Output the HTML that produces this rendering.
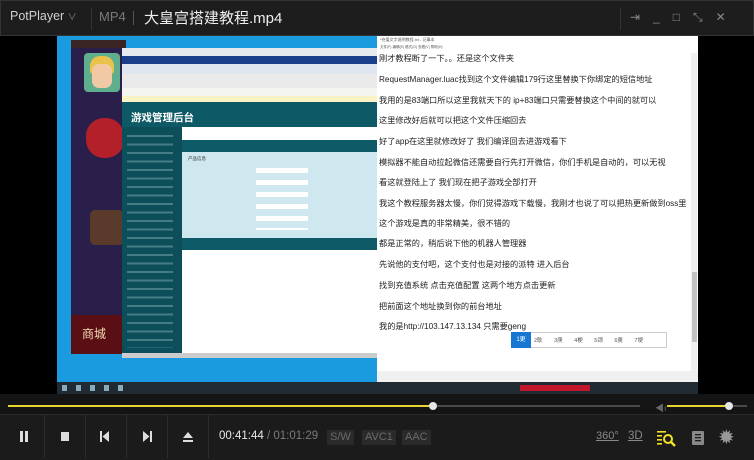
<!DOCTYPE html>
<html><head><meta charset="utf-8"><style>
*{margin:0;padding:0;box-sizing:border-box}
body{width:754px;height:460px;background:#000;overflow:hidden;position:relative;font-family:"Liberation Sans","Noto Sans CJK SC",sans-serif}
.a{position:absolute}
.nl{position:absolute;left:379px;font-size:8.2px;color:#222;white-space:nowrap}
.btn{position:absolute;top:415px;height:43px;border-right:1px solid #2c2c2c}
.tag{position:absolute;top:430px;height:15px;background:#2a2a2a;color:#6a6a6a;font-size:11px;line-height:15px;padding:0 3px}
</style></head><body>
<div class="a" style="left:0;top:0;width:754px;height:36px;background:#1d1d1d;border:1px solid #333"></div>
<div class="a" style="left:91px;top:8px;width:1px;height:22px;background:#333"></div>
<div class="a" style="left:620px;top:8px;width:1px;height:22px;background:#333"></div>
<div class="a" style="left:10px;top:9px;color:#cfcfcf;font-size:12.5px">PotPlayer <span style="font-size:9px;color:#888">∨</span></div>
<div class="a" style="left:99px;top:9px;color:#7a7a7a;font-size:13px">MP4</div>
<div class="a" style="left:133px;top:11px;width:1px;height:14px;background:#555"></div>
<div class="a" style="left:144px;top:7px;color:#eee;font-size:15px">大皇宫搭建教程.mp4</div>
<div class="a" style="left:630px;top:10px;color:#888;font-size:12px;letter-spacing:13px">⇥_□⤡✕</div>
<div class="a" style="left:57px;top:36px;width:641px;height:358px;background:#1a9be0"></div>
<div class="a" style="left:57px;top:382px;width:641px;height:12px;background:#1f2a33"></div>
<div class="a" style="left:62px;top:385px;width:70px;height:6px;background:repeating-linear-gradient(90deg,#8ab 0 5px,transparent 5px 14px)"></div>
<div class="a" style="left:71px;top:40px;width:55px;height:314px;background:#2a1f4a"></div>
<div class="a" style="left:71px;top:40px;width:55px;height:8px;background:#3a2424"></div>
<div class="a" style="left:84px;top:53px;width:36px;height:39px;background:#5fae8e;border-radius:4px"></div>
<div class="a" style="left:90px;top:56px;width:24px;height:18px;background:#e8c24a;border-radius:10px 10px 3px 3px"></div>
<div class="a" style="left:92px;top:64px;width:20px;height:24px;background:#f1c9a5;border-radius:7px"></div>
<div class="a" style="left:86px;top:118px;width:38px;height:40px;background:#b3202a;border-radius:18px"></div>
<div class="a" style="left:90px;top:210px;width:34px;height:35px;background:#5a3a2a;border-radius:5px"></div>
<div class="a" style="left:71px;top:315px;width:55px;height:39px;background:#5a0f14"></div>
<div class="a" style="left:82px;top:325px;color:#f5d9b0;font-size:12px">商城</div>
<div class="a" style="left:122px;top:48px;width:256px;height:310px;background:#fff"></div>
<div class="a" style="left:122px;top:48px;width:256px;height:8px;background:#e6e9ee"></div>
<div class="a" style="left:122px;top:56px;width:256px;height:8px;background:#1a3e8a"></div>
<div class="a" style="left:122px;top:64px;width:256px;height:10px;background:#dfe6f0"></div>
<div class="a" style="left:122px;top:74px;width:256px;height:14px;background:#eaeaea"></div>
<div class="a" style="left:122px;top:88px;width:256px;height:8px;background:#f5f5f0"></div>
<div class="a" style="left:122px;top:96px;width:256px;height:6px;background:#fbf2c6"></div>
<div class="a" style="left:122px;top:102px;width:256px;height:25px;background:#0d5966"></div>
<div class="a" style="left:131px;top:110px;color:#fff;font-size:10.5px;font-weight:bold">游戏管理后台</div>
<div class="a" style="left:122px;top:127px;width:60px;height:226px;background:#0c4e5a"></div>
<div class="a" style="left:127px;top:133px;width:46px;height:215px;background:repeating-linear-gradient(180deg,transparent 0 2px,#6c9aa2 2px 4px,transparent 4px 8.5px);opacity:.6"></div>
<div class="a" style="left:182px;top:140px;width:196px;height:12px;background:#0e5a66"></div>
<div class="a" style="left:182px;top:152px;width:196px;height:86px;background:#cfe7ef"></div>
<div class="a" style="left:188px;top:156px;font-size:4.5px;color:#333">产品信息</div>
<div class="a" style="left:256px;top:168px;width:52px;height:62px;background:repeating-linear-gradient(180deg,#fff 0 5px,transparent 5px 12px)"></div>
<div class="a" style="left:182px;top:238px;width:196px;height:12px;background:#0e5a66"></div>
<div class="a" style="left:122px;top:353px;width:256px;height:5px;background:#ccc"></div>
<div class="a" style="left:377px;top:36px;width:321px;height:346px;background:#fff"></div>
<div class="a" style="left:380px;top:37px;font-size:4px;color:#555">*充值文字说明教程.txt - 记事本</div>
<div class="a" style="left:380px;top:45px;font-size:3.5px;color:#555">文件(F) 编辑(E) 格式(O) 查看(V) 帮助(H)</div>
<div class="a" style="left:691px;top:53px;width:6px;height:318px;background:#f0f0f0"></div>
<div class="a" style="left:692px;top:272px;width:5px;height:70px;background:#c2c2c2"></div>
<div class="nl" style="top:52px">刚才教程断了一下。。还是这个文件夹</div>
<div class="nl" style="top:73px">RequestManager.luac找到这个文件编辑179行这里替换下你绑定的短信地址</div>
<div class="nl" style="top:94px">我用的是83端口所以这里我就天下的 ip+83端口只需要替换这个中间的就可以</div>
<div class="nl" style="top:114px">这里修改好后就可以把这个文件压缩回去</div>
<div class="nl" style="top:135px">好了app在这里就修改好了 我们编译回去进游戏看下</div>
<div class="nl" style="top:156px">模拟器不能自动拉起微信还需要自行先打开微信，你们手机是自动的，可以无视</div>
<div class="nl" style="top:176px">看这就登陆上了  我们现在把子游戏全部打开</div>
<div class="nl" style="top:197px">我这个教程服务器太慢，你们觉得游戏下载慢，我刚才也说了可以把热更新做到oss里</div>
<div class="nl" style="top:217px">这个游戏是真的非常精美，很不错的</div>
<div class="nl" style="top:237px">都是正常的，稍后说下他的机器人管理器</div>
<div class="nl" style="top:258px">先说他的支付吧，这个支付也是对接的派特  进入后台</div>
<div class="nl" style="top:279px">找到充值系统 点击充值配置 这两个地方点击更新</div>
<div class="nl" style="top:300px">把前面这个地址换到你的前台地址</div>
<div class="nl" style="top:320px">我的是http://103.147.13.134 只需要geng</div>
<div class="a" style="left:511px;top:332px;width:156px;height:16px;background:#fff;border:1px solid #ccc"></div>
<div class="a" style="left:511px;top:332px;width:20px;height:16px;background:#1677d2;color:#fff;font-size:6px;line-height:16px;text-align:center">1更</div>
<div class="a" style="left:534px;top:336px;font-size:5.5px;color:#555;word-spacing:10px">2耿 3庚 4梗 5颈 6羹 7埂</div>
<div class="a" style="left:377px;top:371px;width:321px;height:11px;background:#f0f0f0"></div>
<div class="a" style="left:520px;top:385px;width:70px;height:6px;background:#c0182a"></div>
<div class="a" style="left:0;top:394px;width:754px;height:66px;background:#1b1b1b"></div>
<div class="a" style="left:0;top:394px;width:754px;height:20px;background:#141414"></div>
<div class="a" style="left:8px;top:405px;width:632px;height:2px;background:#4a4a4a"></div>
<div class="a" style="left:8px;top:405px;width:425px;height:2px;background:#e8d331"></div>
<div class="a" style="left:429px;top:402px;width:8px;height:8px;border-radius:50%;background:#e6e6e6"></div>
<div class="a" style="left:655px;top:401px;color:#666;font-size:9px">◀ı</div>
<div class="a" style="left:667px;top:405px;width:80px;height:2px;background:#4a4a4a"></div>
<div class="a" style="left:667px;top:405px;width:62px;height:2px;background:#e8d331"></div>
<div class="a" style="left:725px;top:402px;width:8px;height:8px;border-radius:50%;background:#e6e6e6"></div>
<div class="a" style="left:0;top:414px;width:754px;height:1px;background:#2a2a2a"></div>
<div class="btn" style="left:3px;width:42px"></div>
<div class="btn" style="left:45px;width:41px"></div>
<div class="btn" style="left:86px;width:41px"></div>
<div class="btn" style="left:127px;width:41px"></div>
<div class="btn" style="left:168px;width:41px"></div>
<div class="a" style="left:20px;top:431px;width:3px;height:11px;background:#ddd"></div>
<div class="a" style="left:25px;top:431px;width:3px;height:11px;background:#ddd"></div>
<div class="a" style="left:61px;top:432px;width:8px;height:9px;background:#ddd"></div>
<svg class="a" style="left:100px;top:431px" width="10" height="11"><rect x="0" y="0" width="2" height="11" fill="#ddd"/><path d="M9 0 L2.5 5.5 L9 11Z" fill="#ddd"/></svg>
<svg class="a" style="left:142px;top:431px" width="10" height="11"><rect x="8" y="0" width="2" height="11" fill="#ddd"/><path d="M1 0 L7.5 5.5 L1 11Z" fill="#ddd"/></svg>
<svg class="a" style="left:183px;top:432px" width="10" height="10"><path d="M5 0 L10 6 L0 6Z" fill="#ddd"/><rect x="0" y="8" width="10" height="2" fill="#ddd"/></svg>
<div class="a" style="left:219px;top:430px;font-size:11.5px;color:#e8e8e8">00:41:44 <span style="color:#7a7a7a">/ 01:01:29</span></div>
<div class="tag" style="left:327px">S/W</div>
<div class="tag" style="left:362px">AVC1</div>
<div class="tag" style="left:402px">AAC</div>
<div class="a" style="left:596px;top:430px;color:#888;font-size:11px;text-decoration:underline">360°</div>
<div class="a" style="left:628px;top:430px;color:#888;font-size:11.5px;text-decoration:underline">3D</div>
<svg class="a" style="left:657px;top:430px" width="20" height="17"><g fill="#f2e223"><rect x="0" y="1" width="9" height="1.6"/><rect x="0" y="5" width="5" height="1.6"/><rect x="0" y="9" width="5" height="1.6"/><rect x="0" y="13" width="5" height="1.6"/></g><circle cx="11" cy="9" r="4" stroke="#f2e223" stroke-width="2" fill="none"/><path d="M14 12 L18 16" stroke="#f2e223" stroke-width="2.4"/></svg>
<svg class="a" style="left:692px;top:431px" width="12" height="14"><rect width="12" height="14" rx="1" fill="#888"/><g fill="#1b1b1b"><rect x="3" y="3" width="6" height="1.3"/><rect x="3" y="6" width="6" height="1.3"/><rect x="3" y="9" width="6" height="1.3"/></g></svg>
<div class="a" style="left:718px;top:425px;color:#999;font-size:20px">✹</div>
</body></html>
